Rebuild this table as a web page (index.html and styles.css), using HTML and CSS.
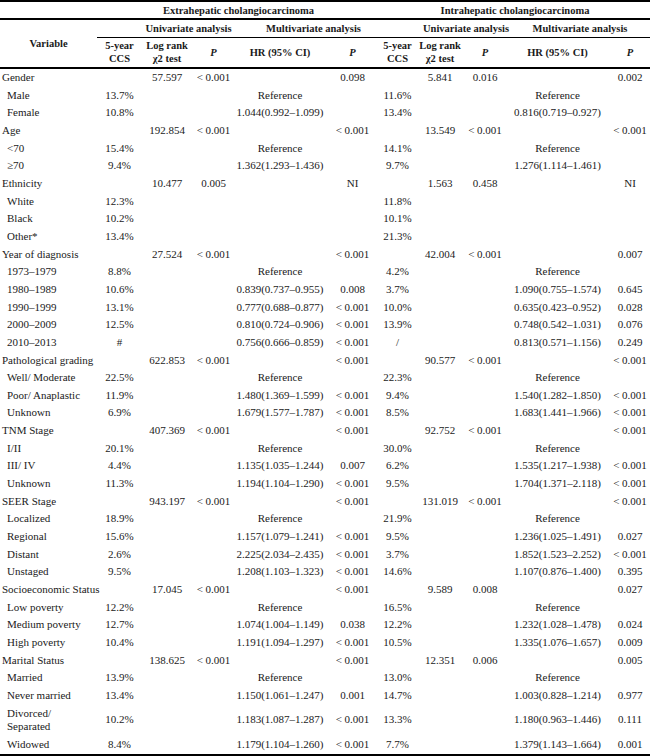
FILE: index.html
```html
<!DOCTYPE html>
<html>
<head>
<meta charset="utf-8">
<link rel="stylesheet" href="styles.css">
</head>
<body>
<table class="tbl">
<colgroup>
<col class="c-var"><col class="c-ccs"><col class="c-lr"><col class="c-p"><col class="c-hr"><col class="c-pm">
<col class="c-ccs2"><col class="c-lr2"><col class="c-p2"><col class="c-hr2"><col class="c-pm2">
</colgroup>
<thead>
<tr class="h1">
<th></th>
<th colspan="5">Extrahepatic cholangiocarcinoma</th>
<th colspan="5">Intrahepatic cholangiocarcinoma</th>
</tr>
<tr class="h2">
<th rowspan="2" class="var">Variable</th>
<th></th>
<th colspan="2">Univariate analysis</th>
<th colspan="2" class="multi">Multivariate analysis</th>
<th></th>
<th colspan="2" class="uni2">Univariate analysis</th>
<th colspan="2" class="multi2">Multivariate analysis</th>
</tr>
<tr class="h3">
<th>5-year<br>CCS</th>
<th>Log rank<br>χ2 test</th>
<th><i>P</i></th>
<th>HR (95% CI)</th>
<th><i>P</i></th>
<th>5-year<br>CCS</th>
<th>Log rank<br>χ2 test</th>
<th><i>P</i></th>
<th>HR (95% CI)</th>
<th><i>P</i></th>
</tr>
</thead>
<tbody>
<tr><td class="cat">Gender</td><td></td><td>57.597</td><td>&lt; 0.001</td><td></td><td>0.098</td><td></td><td>5.841</td><td>0.016</td><td></td><td>0.002</td></tr>
<tr><td class="sub">Male</td><td>13.7%</td><td></td><td></td><td>Reference</td><td></td><td>11.6%</td><td></td><td></td><td>Reference</td><td></td></tr>
<tr><td class="sub">Female</td><td>10.8%</td><td></td><td></td><td>1.044(0.992–1.099)</td><td></td><td>13.4%</td><td></td><td></td><td>0.816(0.719–0.927)</td><td></td></tr>
<tr><td class="cat">Age</td><td></td><td>192.854</td><td>&lt; 0.001</td><td></td><td>&lt; 0.001</td><td></td><td>13.549</td><td>&lt; 0.001</td><td></td><td>&lt; 0.001</td></tr>
<tr><td class="sub">&lt;70</td><td>15.4%</td><td></td><td></td><td>Reference</td><td></td><td>14.1%</td><td></td><td></td><td>Reference</td><td></td></tr>
<tr><td class="sub">≥70</td><td>9.4%</td><td></td><td></td><td>1.362(1.293–1.436)</td><td></td><td>9.7%</td><td></td><td></td><td>1.276(1.114–1.461)</td><td></td></tr>
<tr><td class="cat">Ethnicity</td><td></td><td>10.477</td><td>0.005</td><td></td><td>NI</td><td></td><td>1.563</td><td>0.458</td><td></td><td>NI</td></tr>
<tr><td class="sub">White</td><td>12.3%</td><td></td><td></td><td></td><td></td><td>11.8%</td><td></td><td></td><td></td><td></td></tr>
<tr><td class="sub">Black</td><td>10.2%</td><td></td><td></td><td></td><td></td><td>10.1%</td><td></td><td></td><td></td><td></td></tr>
<tr><td class="sub">Other*</td><td>13.4%</td><td></td><td></td><td></td><td></td><td>21.3%</td><td></td><td></td><td></td><td></td></tr>
<tr><td class="cat">Year of diagnosis</td><td></td><td>27.524</td><td>&lt; 0.001</td><td></td><td>&lt; 0.001</td><td></td><td>42.004</td><td>&lt; 0.001</td><td></td><td>0.007</td></tr>
<tr><td class="sub">1973–1979</td><td>8.8%</td><td></td><td></td><td>Reference</td><td></td><td>4.2%</td><td></td><td></td><td>Reference</td><td></td></tr>
<tr><td class="sub">1980–1989</td><td>10.6%</td><td></td><td></td><td>0.839(0.737–0.955)</td><td>0.008</td><td>3.7%</td><td></td><td></td><td>1.090(0.755–1.574)</td><td>0.645</td></tr>
<tr><td class="sub">1990–1999</td><td>13.1%</td><td></td><td></td><td>0.777(0.688–0.877)</td><td>&lt; 0.001</td><td>10.0%</td><td></td><td></td><td>0.635(0.423–0.952)</td><td>0.028</td></tr>
<tr><td class="sub">2000–2009</td><td>12.5%</td><td></td><td></td><td>0.810(0.724–0.906)</td><td>&lt; 0.001</td><td>13.9%</td><td></td><td></td><td>0.748(0.542–1.031)</td><td>0.076</td></tr>
<tr><td class="sub">2010–2013</td><td>#</td><td></td><td></td><td>0.756(0.666–0.859)</td><td>&lt; 0.001</td><td>/</td><td></td><td></td><td>0.813(0.571–1.156)</td><td>0.249</td></tr>
<tr><td class="cat">Pathological grading</td><td></td><td>622.853</td><td>&lt; 0.001</td><td></td><td>&lt; 0.001</td><td></td><td>90.577</td><td>&lt; 0.001</td><td></td><td>&lt; 0.001</td></tr>
<tr><td class="sub">Well/ Moderate</td><td>22.5%</td><td></td><td></td><td>Reference</td><td></td><td>22.3%</td><td></td><td></td><td>Reference</td><td></td></tr>
<tr><td class="sub">Poor/ Anaplastic</td><td>11.9%</td><td></td><td></td><td>1.480(1.369–1.599)</td><td>&lt; 0.001</td><td>9.4%</td><td></td><td></td><td>1.540(1.282–1.850)</td><td>&lt; 0.001</td></tr>
<tr><td class="sub">Unknown</td><td>6.9%</td><td></td><td></td><td>1.679(1.577–1.787)</td><td>&lt; 0.001</td><td>8.5%</td><td></td><td></td><td>1.683(1.441–1.966)</td><td>&lt; 0.001</td></tr>
<tr><td class="cat">TNM Stage</td><td></td><td>407.369</td><td>&lt; 0.001</td><td></td><td>&lt; 0.001</td><td></td><td>92.752</td><td>&lt; 0.001</td><td></td><td>&lt; 0.001</td></tr>
<tr><td class="sub">I/II</td><td>20.1%</td><td></td><td></td><td>Reference</td><td></td><td>30.0%</td><td></td><td></td><td>Reference</td><td></td></tr>
<tr><td class="sub">III/ IV</td><td>4.4%</td><td></td><td></td><td>1.135(1.035–1.244)</td><td>0.007</td><td>6.2%</td><td></td><td></td><td>1.535(1.217–1.938)</td><td>&lt; 0.001</td></tr>
<tr><td class="sub">Unknown</td><td>11.3%</td><td></td><td></td><td>1.194(1.104–1.290)</td><td>&lt; 0.001</td><td>9.5%</td><td></td><td></td><td>1.704(1.371–2.118)</td><td>&lt; 0.001</td></tr>
<tr><td class="cat">SEER Stage</td><td></td><td>943.197</td><td>&lt; 0.001</td><td></td><td>&lt; 0.001</td><td></td><td>131.019</td><td>&lt; 0.001</td><td></td><td>&lt; 0.001</td></tr>
<tr><td class="sub">Localized</td><td>18.9%</td><td></td><td></td><td>Reference</td><td></td><td>21.9%</td><td></td><td></td><td>Reference</td><td></td></tr>
<tr><td class="sub">Regional</td><td>15.6%</td><td></td><td></td><td>1.157(1.079–1.241)</td><td>&lt; 0.001</td><td>9.5%</td><td></td><td></td><td>1.236(1.025–1.491)</td><td>0.027</td></tr>
<tr><td class="sub">Distant</td><td>2.6%</td><td></td><td></td><td>2.225(2.034–2.435)</td><td>&lt; 0.001</td><td>3.7%</td><td></td><td></td><td>1.852(1.523–2.252)</td><td>&lt; 0.001</td></tr>
<tr><td class="sub">Unstaged</td><td>9.5%</td><td></td><td></td><td>1.208(1.103–1.323)</td><td>&lt; 0.001</td><td>14.6%</td><td></td><td></td><td>1.107(0.876–1.400)</td><td>0.395</td></tr>
<tr><td class="cat">Socioeconomic Status</td><td></td><td>17.045</td><td>&lt; 0.001</td><td></td><td>&lt; 0.001</td><td></td><td>9.589</td><td>0.008</td><td></td><td>0.027</td></tr>
<tr><td class="sub">Low poverty</td><td>12.2%</td><td></td><td></td><td>Reference</td><td></td><td>16.5%</td><td></td><td></td><td>Reference</td><td></td></tr>
<tr><td class="sub">Medium poverty</td><td>12.7%</td><td></td><td></td><td>1.074(1.004–1.149)</td><td>0.038</td><td>12.2%</td><td></td><td></td><td>1.232(1.028–1.478)</td><td>0.024</td></tr>
<tr><td class="sub">High poverty</td><td>10.4%</td><td></td><td></td><td>1.191(1.094–1.297)</td><td>&lt; 0.001</td><td>10.5%</td><td></td><td></td><td>1.335(1.076–1.657)</td><td>0.009</td></tr>
<tr><td class="cat">Marital Status</td><td></td><td>138.625</td><td>&lt; 0.001</td><td></td><td>&lt; 0.001</td><td></td><td>12.351</td><td>0.006</td><td></td><td>0.005</td></tr>
<tr><td class="sub">Married</td><td>13.9%</td><td></td><td></td><td>Reference</td><td></td><td>13.0%</td><td></td><td></td><td>Reference</td><td></td></tr>
<tr><td class="sub">Never married</td><td>13.4%</td><td></td><td></td><td>1.150(1.061–1.247)</td><td>0.001</td><td>14.7%</td><td></td><td></td><td>1.003(0.828–1.214)</td><td>0.977</td></tr>
<tr><td class="sub">Divorced/<br>Separated</td><td>10.2%</td><td></td><td></td><td>1.183(1.087–1.287)</td><td>&lt; 0.001</td><td>13.3%</td><td></td><td></td><td>1.180(0.963–1.446)</td><td>0.111</td></tr>
<tr><td class="sub">Widowed</td><td>8.4%</td><td></td><td></td><td>1.179(1.104–1.260)</td><td>&lt; 0.001</td><td>7.7%</td><td></td><td></td><td>1.379(1.143–1.664)</td><td>0.001</td></tr>
</tbody>
</table>
</body>
</html>
```
FILE: styles.css
```css
html, body {
  margin: 0;
  padding: 0;
  background: #fff;
}
body {
  font-family: "Liberation Serif", "Times New Roman", serif;
  font-size: 11px;
  color: #1a1a1a;
}
.tbl {
  width: 650px;
  table-layout: fixed;
  border-collapse: collapse;
  border-top: 2px solid #000;
  border-bottom: 2px solid #000;
}
.c-var { width: 97px; }
.c-ccs { width: 45px; }
.c-lr { width: 50px; }
.c-p { width: 43px; }
.c-hr { width: 90px; }
.c-pm { width: 55px; }
.c-ccs2 { width: 35px; }
.c-lr2 { width: 50px; }
.c-p2 { width: 40px; }
.c-hr2 { width: 105px; }
.c-pm2 { width: 40px; }

th {
  font-size: 10.5px;
  font-weight: bold;
  text-align: center;
  vertical-align: middle;
  padding: 2px 0;
  line-height: 13px;
  white-space: nowrap;
}
.h1 th {
  border-bottom: 2px solid #000;
  height: 13px;
  padding: 2px 0 1px;
}
.h2 th {
  border-bottom: 1px solid #000;
  height: 13px;
}
.h2 th.var {
  border-bottom: 2px solid #000;
}
.h2 th.multi {
  padding-left: 12px;
}
.h2 th.uni2 {
  padding-left: 8px;
}
.h2 th.multi2 {
  padding-left: 5px;
}
.h3 th {
  border-bottom: 2px solid #000;
  padding: 1px 0 2px;
}
td {
  text-align: center;
  vertical-align: middle;
  padding: 2px 0;
  line-height: 13.65px;
  white-space: nowrap;
}
td.cat {
  text-align: left;
  padding-left: 2px;
}
td.sub {
  text-align: left;
  padding-left: 7px;
  white-space: normal;
}
```
